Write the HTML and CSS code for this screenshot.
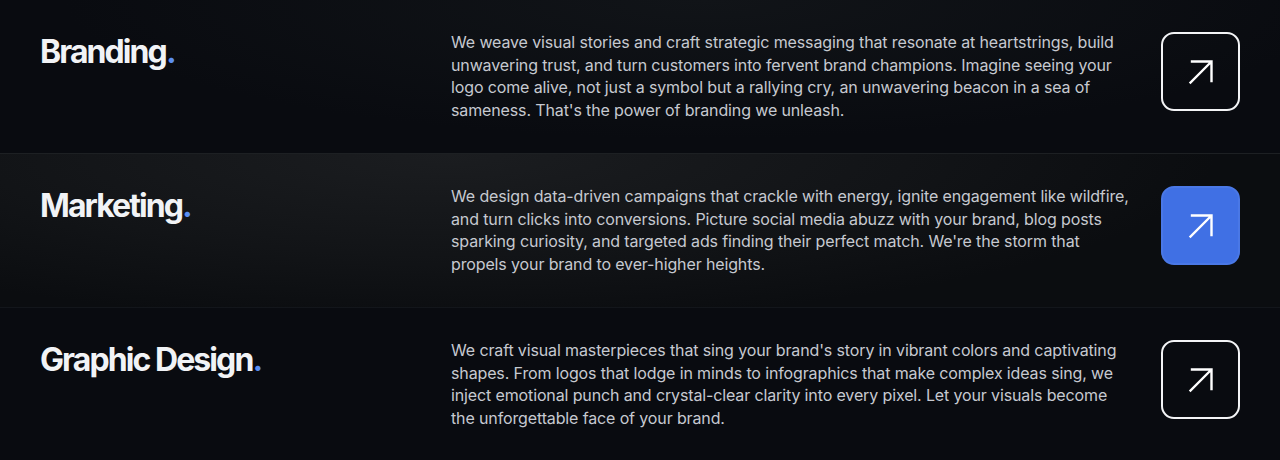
FILE: index.html
```html
<!DOCTYPE html>
<html lang="en">
  <head>
    <meta charset="UTF-8" />
    <meta name="viewport" content="width=device-width, initial-scale=1.0" />
    <title>Services</title>
    <link rel="stylesheet" href="styles.css">
  </head>
  <body>
    <section class="services">
      <div class="service">
        <h2 class="service-title">Branding<span class="dot">.</span></h2>
        <p class="service-text">We weave visual stories and craft strategic messaging that resonate at heartstrings, build unwavering trust, and turn customers into fervent brand champions. Imagine seeing your logo come alive, not just a symbol but a rallying cry, an unwavering beacon in a sea of sameness. That's the power of branding we unleash.</p>
        <a class="service-link" href="#">
          <svg width="26" height="26" viewBox="0 0 26 26" fill="none" stroke="currentColor" stroke-width="2.4" stroke-linecap="square">
            <path d="M2.5 23.5 L23 3 M4 2.5 H23.5 V22" />
          </svg>
        </a>
      </div>

      <div class="service active">
        <h2 class="service-title">Marketing<span class="dot">.</span></h2>
        <p class="service-text">We design data-driven campaigns that crackle with energy, ignite engagement like wildfire, and turn clicks into conversions. Picture social media abuzz with your brand, blog posts sparking curiosity, and targeted ads finding their perfect match. We're the storm that propels your brand to ever-higher heights.</p>
        <a class="service-link" href="#">
          <svg width="26" height="26" viewBox="0 0 26 26" fill="none" stroke="currentColor" stroke-width="2.4" stroke-linecap="square">
            <path d="M2.5 23.5 L23 3 M4 2.5 H23.5 V22" />
          </svg>
        </a>
      </div>

      <div class="service">
        <h2 class="service-title">Graphic Design<span class="dot">.</span></h2>
        <p class="service-text">We craft visual masterpieces that sing your brand's story in vibrant colors and captivating shapes. From logos that lodge in minds to infographics that make complex ideas sing, we inject emotional punch and crystal-clear clarity into every pixel. Let your visuals become the unforgettable face of your brand.</p>
        <a class="service-link" href="#">
          <svg width="26" height="26" viewBox="0 0 26 26" fill="none" stroke="currentColor" stroke-width="2.4" stroke-linecap="square">
            <path d="M2.5 23.5 L23 3 M4 2.5 H23.5 V22" />
          </svg>
        </a>
      </div>
    </section>
  </body>
</html>
```

FILE: styles.css
```css
body {
  font-family: Inter, "Noto Sans", sans-serif;
  background-color: #090b10;
  background-image: radial-gradient(ellipse 50% 30% at 55% 0%, #111418, #090b10);
  color: #f1f3f6;
  margin: 0;
  padding: 0;
}

.service {
  display: grid;
  grid-template-columns: 411px 680px 1fr;
  align-items: start;
  padding: 32px 40px 32px;
  border-bottom: 1px solid #13161b;
}

.service.active {
  background: radial-gradient(ellipse 60% 110% at 35% 0%, #1b1d20, #121417 60%, #0b0d10);
  border-top: 1px solid #1d2023;
  margin-top: -1px;
}

.service-title {
  margin: 4px 0 0;
  font-size: 32px;
  line-height: 1;
  font-weight: 700;
  letter-spacing: -0.06em;
  color: #f1f3f6;
}

.dot {
  color: #5b8ef0;
  letter-spacing: 0;
}

.service-text {
  margin: -1px 0 0;
  font-size: 16px;
  line-height: 22.5px;
  letter-spacing: -0.13px;
  color: #c6c9d0;
}

.service-link {
  justify-self: end;
  width: 79px;
  height: 79px;
  box-sizing: border-box;
  border: 2px solid #f3f4f6;
  border-radius: 13px;
  color: #ffffff;
  display: flex;
  align-items: center;
  justify-content: center;
}

.active .service-link {
  background-color: #4070e4;
  border-color: #4a78e6;
}
```
